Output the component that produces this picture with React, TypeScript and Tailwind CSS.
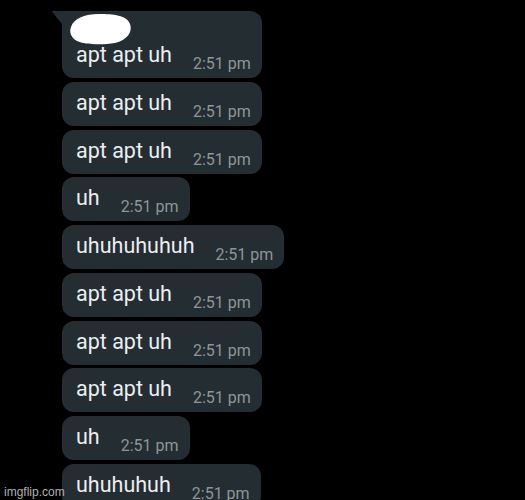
import React from "react";

type Msg = { text: string };

const msgs: Msg[] = [
  { text: "apt apt uh" },
  { text: "apt apt uh" },
  { text: "uh" },
  { text: "uhuhuhuhuh" },
  { text: "apt apt uh" },
  { text: "apt apt uh" },
  { text: "apt apt uh" },
  { text: "uh" },
  { text: "uhuhuhuh" },
];

function Row({ text }: { text: string }) {
  return (
    <div className="flex items-start h-[44px] pl-[14px] pr-[11px]">
      <span className="pt-[9px] text-[21.5px] leading-[24px] text-[#eceeef] whitespace-nowrap">
        {text}
      </span>
      <span className="ml-[21px] mt-[22px] text-[16px] leading-[16px] text-[#8e969a] whitespace-nowrap">
        2:51 pm
      </span>
    </div>
  );
}

export default function App() {
  return (
    <div
      className="relative w-[525px] h-[500px] overflow-hidden bg-black"
      style={{ fontFamily: "Roboto, 'Noto Sans', sans-serif" }}
    >
      <div className="flex flex-col items-start gap-[3.75px] pl-[62px] pt-[10.5px]">
        <div className="relative bg-[#232d32] rounded-[12px] rounded-tl-none">
          <svg
            className="absolute left-[-10px] top-0"
            width="10"
            height="13"
            viewBox="0 0 10 13"
          >
            <path d="M0.5 0 L10 0 L10 13 L0.3 1 Q-0.2 0 0.5 0 Z" fill="#232d32" />
          </svg>
          <div className="h-[23.5px]" />
          <Row text="apt apt uh" />
          <svg
            className="absolute left-[7px] top-[1px]"
            width="64"
            height="34"
            viewBox="0 0 64 34"
          >
            <path
              d="M2 15 C5 6 16 2 30 2 C44 2 58 3 61 12 C64 20 58 28 46 31 C34 33 16 33 8 29 C2 26 0 20 2 15 Z"
              fill="#ffffff"
            />
          </svg>
        </div>
        {msgs.map((m, i) => (
          <div key={i} className="bg-[#232d32] rounded-[12px]">
            <Row text={m.text} />
          </div>
        ))}
      </div>
      <div
        className="absolute left-[4px] top-[485px] text-[12px] leading-[14px] text-[#b0b0b0]"
        style={{ fontFamily: "'Liberation Sans', Arial, sans-serif" }}
      >
        imgflip.com
      </div>
    </div>
  );
}
